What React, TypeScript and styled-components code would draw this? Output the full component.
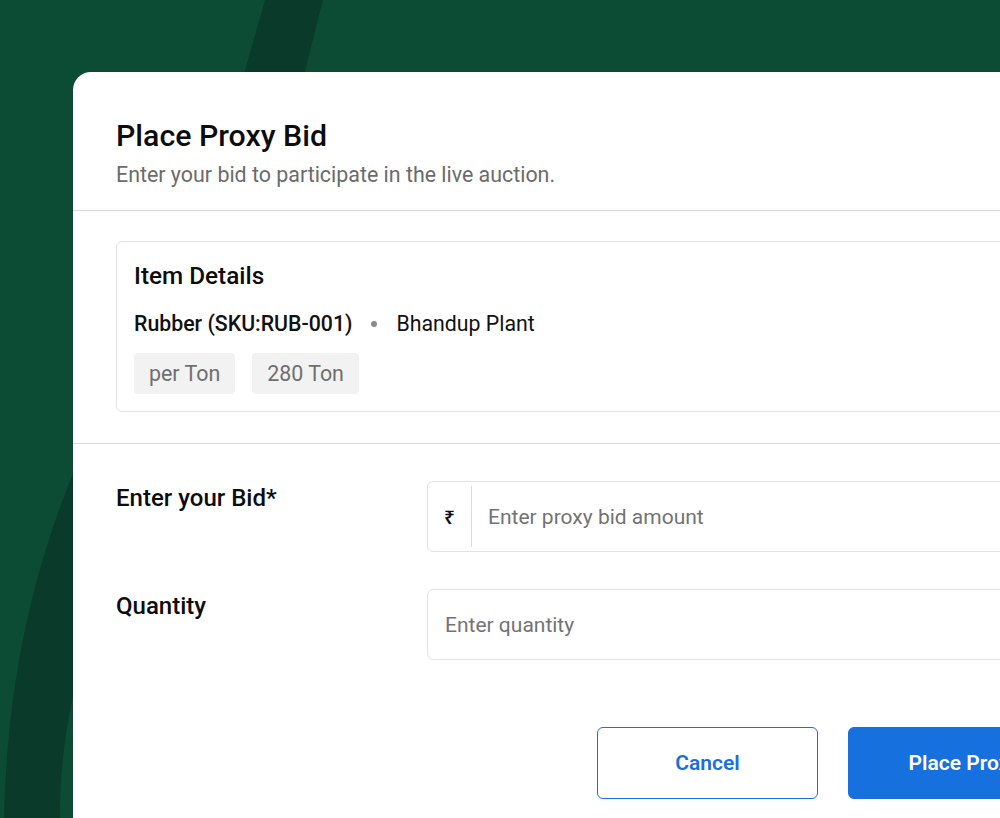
import React from "react";
import styled, { createGlobalStyle } from "styled-components";

const Global = createGlobalStyle`
  html, body {
    margin: 0;
    padding: 0;
    width: 1000px;
    height: 818px;
    overflow: hidden;
    background: #0c4c35;
    font-family: Roboto, "Noto Sans", Arial, sans-serif;
  }
  * { box-sizing: border-box; }
`;

const Page = styled.div`
  position: relative;
  width: 1000px;
  height: 818px;
  overflow: hidden;
  padding: 72px 0 0 73px;
`;

const Backdrop = styled.svg`
  position: absolute;
  inset: 0;
  width: 1000px;
  height: 818px;
  z-index: 0;
`;

const Card = styled.div`
  position: relative;
  z-index: 1;
  width: 1086px;
  flex-shrink: 0;
  background: #ffffff;
  border-radius: 18px;
  box-shadow: 0 0 0 1px rgba(0, 0, 0, 0.04);
`;

const Header = styled.div`
  padding: 46px 43px 22px;
  border-bottom: 1px solid #d8d8d8;
`;

const Title = styled.h1`
  margin: 0;
  font-size: 30.3px;
  line-height: 36px;
  font-weight: 500;
  color: #0d0d0d;
`;

const Subtitle = styled.p`
  margin: 8px 0 0;
  font-size: 21.4px;
  line-height: 26px;
  color: #6b6b6b;
`;

const Section = styled.div<{ $pt: number; $pb: number; $divider?: boolean }>`
  padding: ${(p) => p.$pt}px 43px ${(p) => p.$pb}px;
  border-bottom: ${(p) => (p.$divider ? "1px solid #d8d8d8" : "none")};
`;

const DetailsBox = styled.div`
  border: 1px solid #e3e3e3;
  border-radius: 6px;
  padding: 19px 17px 17px;
  display: flex;
  flex-direction: column;
`;

const BoxTitle = styled.h2`
  margin: 0;
  font-size: 24.3px;
  line-height: 30px;
  font-weight: 500;
  color: #0d0d0d;
`;

const MetaRow = styled.div`
  margin-top: 20px;
  display: flex;
  align-items: center;
  gap: 19px;
  font-size: 21.3px;
  line-height: 26px;
  color: #111;
`;

const Strong = styled.span`
  font-weight: 500;
`;

const Dot = styled.span`
  width: 6px;
  height: 6px;
  border-radius: 50%;
  background: #8a8a8a;
`;

const Chips = styled.div`
  margin-top: 16px;
  display: flex;
  gap: 17px;
`;

const Chip = styled.span`
  height: 41px;
  display: inline-flex;
  align-items: center;
  padding: 0 15px;
  border-radius: 4px;
  background: #f2f2f2;
  color: #6f6f6f;
  font-size: 21.4px;
`;

const Form = styled.div`
  display: grid;
  grid-template-columns: 311px 1fr;
  row-gap: 37px;
`;

const Label = styled.label`
  padding-top: 2px;
  font-size: 24px;
  line-height: 30px;
  font-weight: 500;
  color: #0d0d0d;
`;

const InputBox = styled.div`
  height: 71px;
  display: flex;
  align-items: stretch;
  border: 1px solid #e3e3e3;
  border-radius: 6px;
  padding: 4px 0;
`;

const Prefix = styled.span`
  width: 44px;
  display: flex;
  align-items: center;
  justify-content: center;
  border-right: 1px solid #dcdcdc;
  font-size: 19px;
  font-weight: 600;
  color: #111;
  font-family: "Noto Sans", "DejaVu Sans", sans-serif;
`;

const Input = styled.input<{ $pl: number }>`
  flex: 1;
  border: none;
  outline: none;
  background: transparent;
  padding: 0 0 0 ${(p) => p.$pl}px;
  font-family: Roboto, "Noto Sans", Arial, sans-serif;
  font-size: 21px;
  color: #111;
  &::placeholder {
    color: #737373;
  }
`;

const Footer = styled.div`
  padding: 30px 43px 40px;
  display: flex;
  justify-content: flex-end;
  gap: 30px;
`;

const Button = styled.button<{ $primary?: boolean; $w: number }>`
  width: ${(p) => p.$w}px;
  height: 72px;
  border-radius: 6px;
  font-family: Roboto, "Noto Sans", Arial, sans-serif;
  font-size: 21px;
  font-weight: 600;
  cursor: pointer;
  border: 1.5px solid #1a6fdc;
  background: ${(p) => (p.$primary ? "#1670de" : "#ffffff")};
  color: ${(p) => (p.$primary ? "#ffffff" : "#1a6fdc")};
  white-space: nowrap;
`;

export default function App() {
  return (
    <>
      <Global />
      <Page>
        <Backdrop viewBox="0 0 1000 818">
          <path d="M265 0 L323 0 L290 130 L228 130 Z" fill="#0a3b2a" />
          <path
            d="M100 410 C50 520 8 640 4 818 L60 818 C60 760 68 700 90 640 Z"
            fill="#0a3b2a"
          />
        </Backdrop>
        <Card>
          <Header>
            <Title>Place Proxy Bid</Title>
            <Subtitle>Enter your bid to participate in the live auction.</Subtitle>
          </Header>
          <Section $pt={30} $pb={31} $divider>
            <DetailsBox>
              <BoxTitle>Item Details</BoxTitle>
              <MetaRow>
                <Strong>Rubber (SKU:RUB-001)</Strong>
                <Dot />
                <span>Bhandup Plant</span>
              </MetaRow>
              <Chips>
                <Chip>per Ton</Chip>
                <Chip>280 Ton</Chip>
              </Chips>
            </DetailsBox>
          </Section>
          <Section $pt={37} $pb={37}>
            <Form>
              <Label>Enter your Bid*</Label>
              <InputBox>
                <Prefix>₹</Prefix>
                <Input $pl={16} placeholder="Enter proxy bid amount" />
              </InputBox>
              <Label>Quantity</Label>
              <InputBox>
                <Input $pl={17} placeholder="Enter quantity" />
              </InputBox>
            </Form>
          </Section>
          <Footer>
            <Button $w={221}>Cancel</Button>
            <Button $w={268} $primary>
              Place Proxy Bid
            </Button>
          </Footer>
        </Card>
      </Page>
    </>
  );
}
